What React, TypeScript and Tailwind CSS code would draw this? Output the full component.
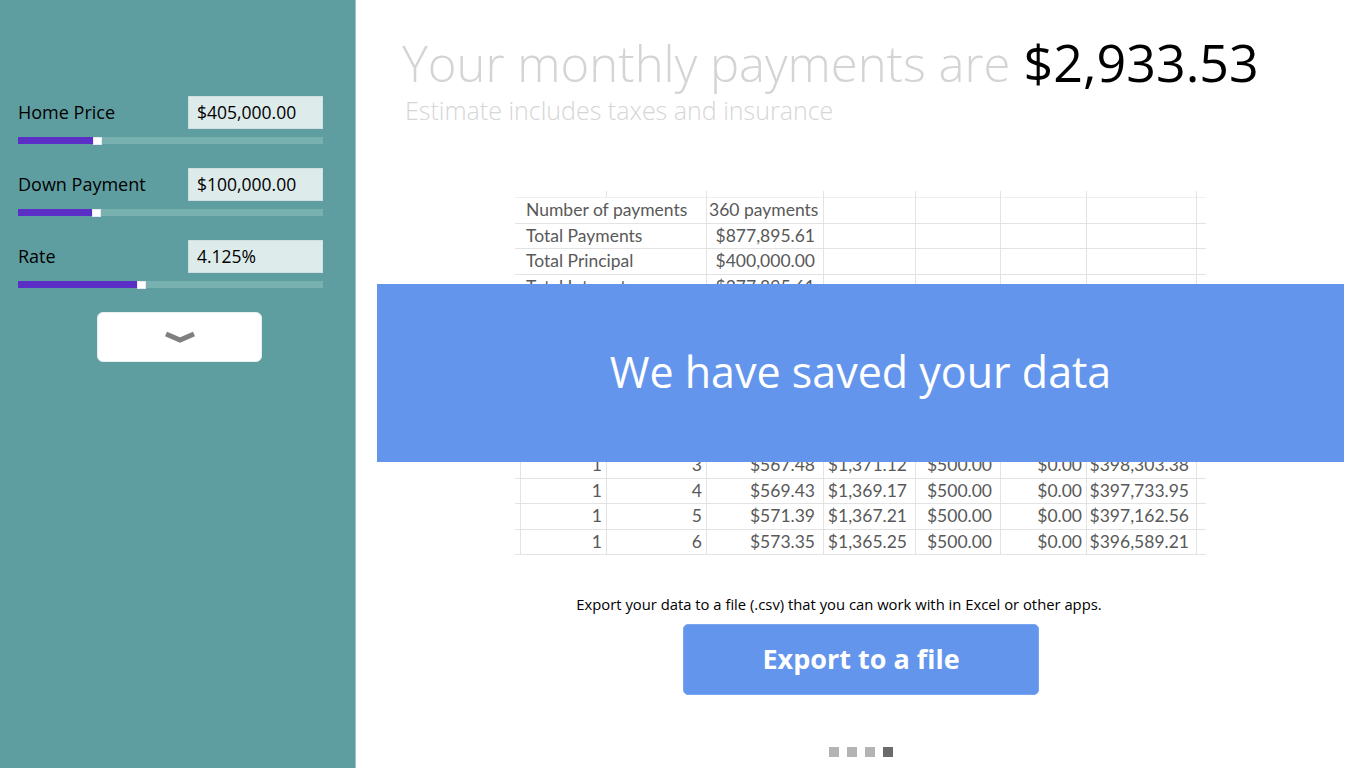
import React from "react";

type Cell = { w: number; text?: string; align?: "left" | "right"; line?: boolean; pr?: number; pl?: number };

const COLS = [6, 86, 100, 117, 92, 85, 86, 110, 9];
const PADS = [4, 4, 8, 8, 8, 4, 7];

const summary: [string, string, boolean][] = [
	["Number of payments", "360 payments", false],
	["Total Payments", "$877,895.61", true],
	["Total Principal", "$400,000.00", true],
	["Total Interest", "$277,895.61", true],
];

const data: string[][] = [
	["", "", "", "", "", "", ""],
	["", "", "", "", "", "", ""],
	["", "", "", "", "", "", ""],
	["", "", "", "", "", "", ""],
	["", "", "", "", "", "", ""],
	["", "", "", "", "", "", ""],
	["1", "3", "$567.48", "$1,371.12", "$500.00", "$0.00", "$398,303.38"],
	["1", "4", "$569.43", "$1,369.17", "$500.00", "$0.00", "$397,733.95"],
	["1", "5", "$571.39", "$1,367.21", "$500.00", "$0.00", "$397,162.56"],
	["1", "6", "$573.35", "$1,365.25", "$500.00", "$0.00", "$396,589.21"],
];

const SheetRow = ({ cells, strip }: { cells: Cell[]; strip?: boolean }) => (
	<div className={`flex ${strip ? "h-[7px]" : "h-[25.5px]"}`}>
		{cells.map((c, i) => (
			<div
				key={i}
				style={{
					width: c.w,
					paddingRight: c.align === "right" ? c.pr ?? 6 : undefined,
					paddingLeft: c.align === "right" ? undefined : c.pl ?? 5,
				}}
				className={`shrink-0 flex items-center overflow-visible whitespace-nowrap border-b ${
					strip ? "border-[#efefef]" : "border-[#e3e3e3]"
				} ${c.line ? "border-r border-r-[#e3e3e3]" : ""} ${
					c.align === "right" ? "justify-end" : "justify-start"
				}`}
			>
				{c.text}
			</div>
		))}
	</div>
);

const Slider = ({ fill }: { fill: number }) => (
	<div className="relative h-[7px] bg-[#79b0b0]">
		<div className="h-full bg-[#5b2fc6]" style={{ width: fill }} />
		<div
			className="absolute top-[-0.5px] h-[8px] w-[9px] bg-white border border-[#e8e8f0]"
			style={{ left: fill }}
		/>
	</div>
);

const Field = ({ label, value, fill }: { label: string; value: string; fill: number }) => (
	<div className="mb-[24px]">
		<div className="flex items-center justify-between">
			<span className="text-[18px] text-black">{label}</span>
			<div className="w-[135px] h-[33px] bg-[#ddebea] border border-[#cde0df] flex items-center pl-[8px] text-[17.5px] text-black">
				{value}
			</div>
		</div>
		<div className="mt-[8px]">
			<Slider fill={fill} />
		</div>
	</div>
);

export default function App() {
	const topCells = (): Cell[] =>
		COLS.map((w, i) => ({ w, line: i > 0 && i < COLS.length - 1 }));

	return (
		<div
			className="flex w-[1366px] h-[768px] overflow-hidden bg-white"
			style={{ fontFamily: '"Open Sans", "Noto Sans", sans-serif' }}
		>
			{/* sidebar */}
			<aside className="w-[356px] shrink-0 h-full bg-[#5f9ea0] border-r border-[#9cc6c6] pl-[18px] pr-[32px] pt-[96px]">
				<Field label="Home Price" value="$405,000.00" fill={75} />
				<Field label="Down Payment" value="$100,000.00" fill={74} />
				<Field label="Rate" value="4.125%" fill={119} />
				<div className="flex pl-[79px] mt-[1px]">
					<button className="w-[165px] h-[50px] bg-white rounded-[6px] border border-[#e6eeee] flex items-center justify-center">
						<svg width="34" height="14" viewBox="0 0 34 14">
							<path d="M3 4 L17 10 L31 4" fill="none" stroke="#7f7f7f" strokeWidth="5" strokeLinejoin="miter" />
						</svg>
					</button>
				</div>
			</aside>

			{/* main */}
			<main className="relative flex-1 h-full flex flex-col">
				<div className="pl-[46px] pt-[36px]">
					<div className="flex items-baseline whitespace-nowrap leading-none">
						<span className="text-[49px] font-light text-[#d4d4d4]">Your monthly payments are</span>
						<span className="ml-[13px] text-[52px] text-black">$2,933.53</span>
					</div>
					<div className="mt-[10px] pl-[3px] text-[25px] font-light text-[#d6d6d6] leading-none">
						Estimate includes taxes and insurance
					</div>
				</div>

				{/* spreadsheet preview */}
				<div
					className="mt-[68px] ml-[159px] w-[691px] text-[17.5px] text-[#595959]"
					style={{ fontFamily: 'Lato, "Liberation Sans", sans-serif' }}
				>
					<SheetRow strip cells={topCells()} />
					{summary.map(([k, v, right]) => (
						<SheetRow
							key={k}
							cells={[
								{ w: 6 },
								{ w: 186, text: k, line: true },
								right
									? { w: 117, text: v, align: "right", line: true, pr: 8 }
									: { w: 117, text: v, line: true, pl: 2 },
								{ w: 92, line: true },
								{ w: 85, line: true },
								{ w: 86, line: true },
								{ w: 110, line: true },
								{ w: 9 },
							]}
						/>
					))}
					{data.map((r, ri) => (
						<SheetRow
							key={ri}
							cells={[
								{ w: 6, line: true },
								...r.map((t, i) => ({
									w: COLS[i + 1],
									text: t,
									align: "right" as const,
									line: true,
									pr: PADS[i],
								})),
								{ w: 9 },
							]}
						/>
					))}
				</div>

				{/* export */}
				<div className="flex flex-col items-center mt-[42px]">
					<p className="mr-[44px] text-[14.8px] text-black leading-none">
						Export your data to a file (.csv) that you can work with in Excel or other apps.
					</p>
					<button className="mt-[12px] w-[356px] h-[71px] rounded-[5px] bg-[#6495ed] border border-[#7aa5f0] text-white text-[27px] font-bold">
						Export to a file
					</button>
					<div className="mt-[52px] flex gap-[8px]">
						<span className="w-[10px] h-[10px] bg-[#b4b4b4]" />
						<span className="w-[10px] h-[10px] bg-[#b4b4b4]" />
						<span className="w-[10px] h-[10px] bg-[#b4b4b4]" />
						<span className="w-[10px] h-[10px] bg-[#6b6b6b]" />
					</div>
				</div>

				{/* saved toast */}
				<div className="absolute left-[21px] top-[284px] w-[967px] h-[178px] bg-[#6495ed] flex items-center justify-center pb-[4px]">
					<span className="text-[43px] text-white leading-none">We have saved your data</span>
				</div>
			</main>
		</div>
	);
}
